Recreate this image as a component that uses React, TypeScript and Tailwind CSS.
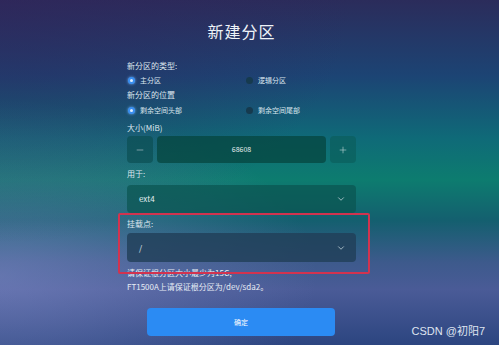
import { ChevronDown, Minus, Plus } from "lucide-react";

const FONT = "font-['Noto_Sans_CJK_SC','Noto_Sans',sans-serif]";

function Radio({ checked, label }: { checked?: boolean; label: string }) {
  return (
    <div className="flex items-center gap-[5px]">
      {checked ? (
        <span className="flex h-[7px] w-[7px] items-center justify-center rounded-full bg-[#3a8ff0] shadow-[0_0_3px_#6fb2ff]">
          <span className="h-[3px] w-[3px] rounded-full bg-[#dfeeff]" />
        </span>
      ) : (
        <span className="h-[7px] w-[7px] rounded-full bg-[#163a4e]" />
      )}
      <span className="text-[7px] text-[#dbe6ee]">{label}</span>
    </div>
  );
}

function Select({ value, dark }: { value: string; dark?: boolean }) {
  return (
    <div
      className={
        "flex items-center justify-between rounded-[4px] pl-[12px] pr-[10px] " +
        (dark ? "h-[29px] bg-[#203f58]/80" : "h-[28px] bg-[#0a5450]/70")
      }
    >
      <span className="text-[8px] text-[#e4eef0]">{value}</span>
      <ChevronDown className="h-[10px] w-[10px] text-[#b9ccd4]" strokeWidth={2} />
    </div>
  );
}

export default function App() {
  return (
    <div
      className={`relative h-[345px] w-[499px] overflow-hidden bg-[linear-gradient(180deg,#2b2c5b_0%,#1c4474_22%,#0f6a78_40%,#0d7c6f_52%,#145f6f_64%,#3d5a8c_76%,#4a5b97_84%,#2c4580_100%)] ${FONT}`}
    >
      <div className="pointer-events-none absolute inset-0 bg-[radial-gradient(ellipse_at_0%_80%,rgba(140,150,210,0.45),transparent_45%)]" />
      <div className="pointer-events-none absolute inset-0 bg-[radial-gradient(ellipse_at_0%_0%,rgba(50,35,90,0.5),transparent_50%)]" />

      <div className="relative ml-[127px] w-[229px]">
        <div className="flex h-[60px] items-center justify-center pt-[2px] text-[16px] tracking-[1px] text-[#eef3f8]">
          新建分区
        </div>

        <div className="flex h-[12px] items-center text-[8px] text-[#dce6ee]">新分区的类型:</div>
        <div className="flex h-[16px] items-center">
          <div className="w-[119px] pl-[1px]">
            <Radio checked label="主分区" />
          </div>
          <Radio label="逻辑分区" />
        </div>
        <div className="flex h-[14px] items-center text-[8px] text-[#dce6ee]">新分区的位置</div>
        <div className="flex h-[16px] items-center">
          <div className="w-[119px] pl-[1px]">
            <Radio checked label="剩余空间头部" />
          </div>
          <Radio label="剩余空间尾部" />
        </div>

        <div className="mt-[2px] flex h-[16px] items-center text-[8px] text-[#dce6ee]">大小(MiB)</div>
        <div className="flex h-[27px] gap-[4px]">
          <div className="flex w-[26px] items-center justify-center rounded-[4px] bg-[#0b4f52]/70">
            <Minus className="h-[10px] w-[10px] text-[#b8c9cf]" strokeWidth={1.5} />
          </div>
          <div className="flex flex-1 items-center justify-center rounded-[4px] bg-[#06463f]/75 text-[7px] text-[#e6eeee]">
            68608
          </div>
          <div className="flex w-[26px] items-center justify-center rounded-[4px] bg-[#0a5c58]/60">
            <Plus className="h-[10px] w-[10px] text-[#b8d2d2]" strokeWidth={1.5} />
          </div>
        </div>

        <div className="flex h-[22px] items-center text-[8px] text-[#dce6ee]">用于:</div>
        <Select value="ext4" />

        <div className="mt-[2px] flex h-[18px] items-center text-[8px] text-[#dce6ee]">挂载点:</div>
        <Select value="/" dark />

        <div className="mt-[4px] flex h-[14px] items-center text-[8px] text-[#e6ecf4]">请保证根分区大小最少为15G,</div>
        <div className="flex h-[13px] items-center text-[8px] text-[#e6ecf4]">FT1500A上请保证根分区为/dev/sda2。</div>

        <div className="ml-[20px] mt-[15px] flex h-[28px] w-[188px] items-center justify-center rounded-[4px] bg-[#2b8bf3] text-[7px] text-white">
          确定
        </div>
      </div>

      <div className="pointer-events-none absolute left-[118px] top-[213px] h-[61px] w-[252px] rounded-[2px] border-2 border-[#d2334f]" />

      <div className="absolute right-[14px] top-[323px] font-['Liberation_Sans','Noto_Sans_CJK_SC',sans-serif] text-[11px] text-[#dfe4f0]">
        CSDN @初阳7
      </div>
    </div>
  );
}
